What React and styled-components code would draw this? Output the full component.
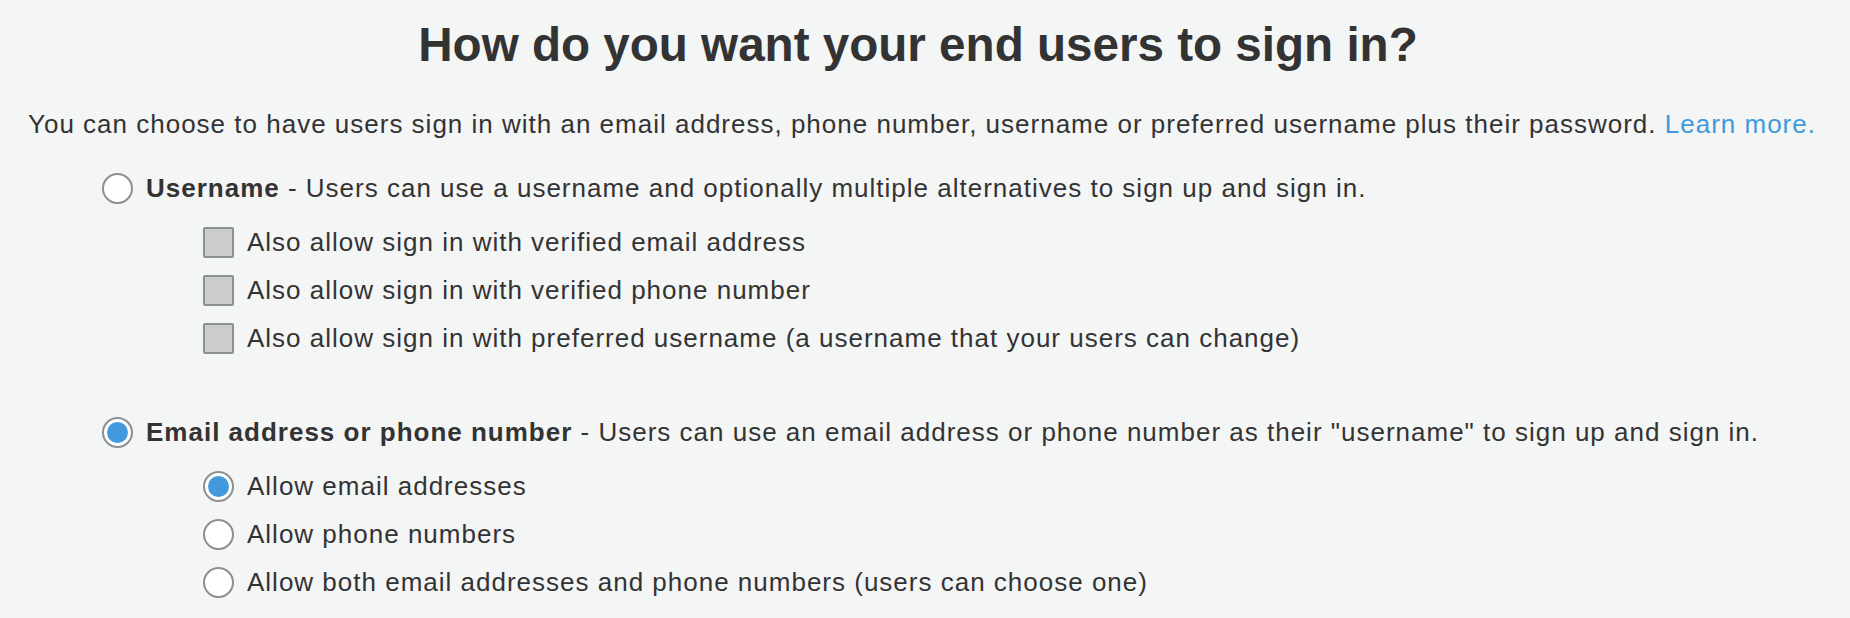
import React from "react";
import styled, {createGlobalStyle, css} from "styled-components";

const GlobalStyle = createGlobalStyle`
    body {
        margin: 0;
        background: #f4f5f5;
        font-family: "Liberation Sans", Arial, sans-serif;
        color: #333333;
    }
`;

const Page = styled.div`
    padding: 17px 0 0 28px;
    min-height: 618px;
    box-sizing: border-box;
`;

const Title = styled.h1`
    margin: 0;
    padding-right: 42px;
    text-align: center;
    font-size: 47.6px;
    line-height: 56px;
    font-weight: 700;
    color: #333333;
`;

const Intro = styled.p`
    margin: 36px 0 0 0;
    font-size: 26px;
    letter-spacing: 1px;
    line-height: 30px;
    white-space: nowrap;
`;

const Link = styled.a`
    color: #4199db;
    text-decoration: none;
`;

const Options = styled.div`
    margin-top: 25px;
    padding-left: 74px;
    display: flex;
    flex-direction: column;
    gap: 46px;
`;

const Section = styled.div`
    display: flex;
    flex-direction: column;
`;

const SubList = styled.div`
    margin-top: 6px;
    padding-left: 101px;
    display: flex;
    flex-direction: column;
`;

const Row = styled.div`
    display: flex;
    align-items: center;
    height: 48px;
    gap: 13px;
    font-size: 26px;
    letter-spacing: 1px;
    line-height: 30px;
    white-space: nowrap;
`;

const Radio = styled.span`
    flex: none;
    width: 31px;
    height: 31px;
    box-sizing: border-box;
    border: 2px solid #8b8f92;
    border-radius: 50%;
    background: #ffffff;
    position: relative;
    ${props => props.checked && css`
        &::after {
            content: "";
            position: absolute;
            left: 3px;
            top: 3px;
            width: 21px;
            height: 21px;
            border-radius: 50%;
            background: #4299dc;
        }
    `}
`;

const Checkbox = styled.span`
    flex: none;
    width: 31px;
    height: 31px;
    box-sizing: border-box;
    border: 2px solid #8a9194;
    border-radius: 2px;
    background: #cccccc;
`;

const Strong = styled.b`
    font-weight: 700;
`;

function Option({kind, checked, children}){
    return(
        <Row>
            {kind === "check" ? <Checkbox/> : <Radio checked={checked}/>}
            <span>{children}</span>
        </Row>
    );
}

export default function App(){
    return(
        <Page>
            <GlobalStyle/>
            <Title>How do you want your end users to sign in?</Title>
            <Intro>
                You can choose to have users sign in with an email address, phone number, username or preferred username plus their password. <Link href="#">Learn more.</Link>
            </Intro>
            <Options>
                <Section>
                    <Option>
                        <Strong>Username</Strong> - Users can use a username and optionally multiple alternatives to sign up and sign in.
                    </Option>
                    <SubList>
                        <Option kind="check">Also allow sign in with verified email address</Option>
                        <Option kind="check">Also allow sign in with verified phone number</Option>
                        <Option kind="check">Also allow sign in with preferred username (a username that your users can change)</Option>
                    </SubList>
                </Section>
                <Section>
                    <Option checked>
                        <Strong>Email address or phone number</Strong> - Users can use an email address or phone number as their "username" to sign up and sign in.
                    </Option>
                    <SubList>
                        <Option checked>Allow email addresses</Option>
                        <Option>Allow phone numbers</Option>
                        <Option>Allow both email addresses and phone numbers (users can choose one)</Option>
                    </SubList>
                </Section>
            </Options>
        </Page>
    );
}
